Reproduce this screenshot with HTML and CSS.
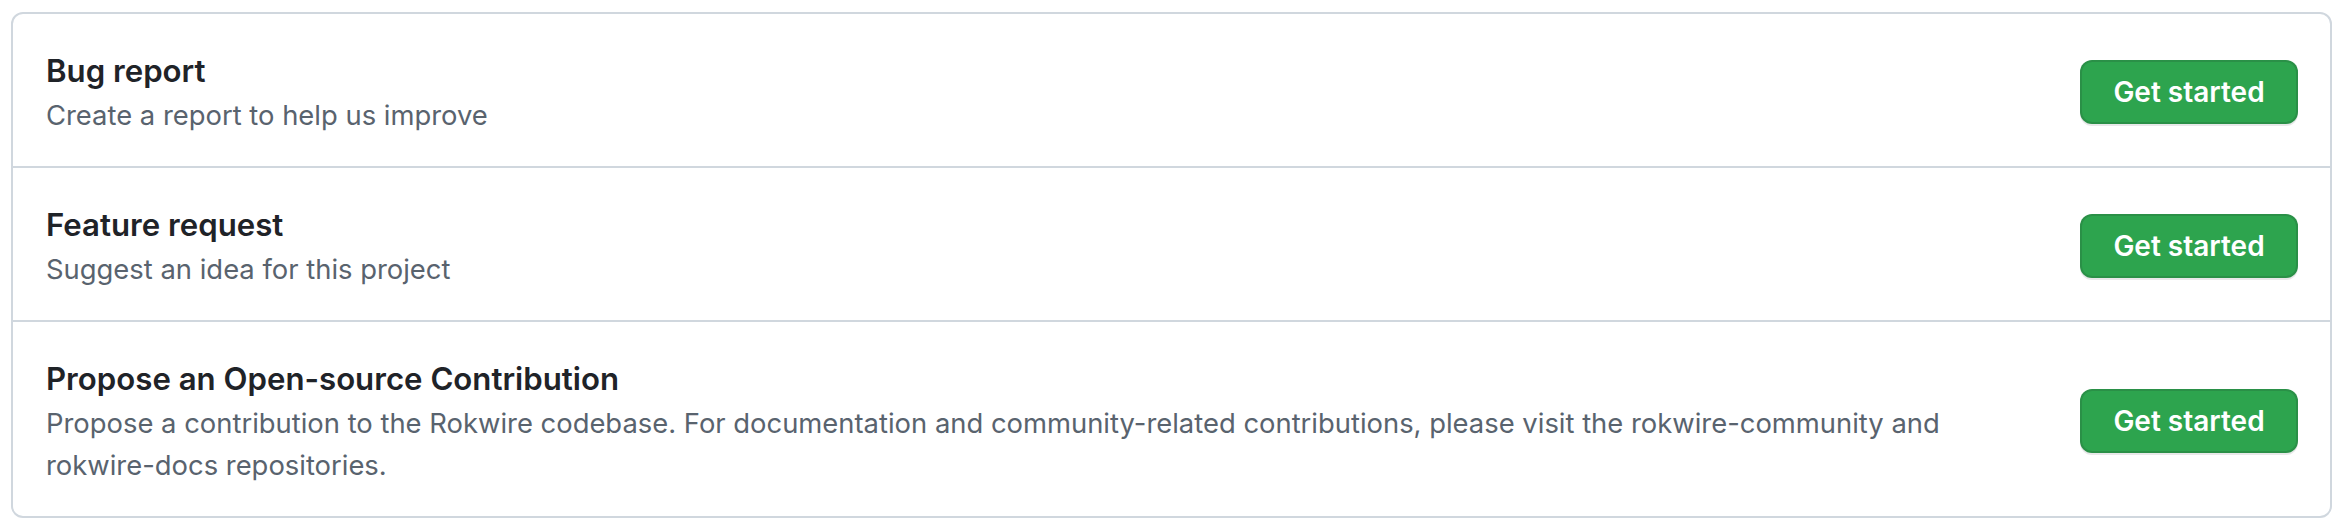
FILE: index.html
```html
<!DOCTYPE html>
<html lang="en">
<head>
<meta charset="utf-8">
<title>Issue templates</title>
<link rel="stylesheet" href="styles.css">
</head>
<body>
<div class="box">
  <div class="row">
    <div class="info">
      <h3 class="title">Bug report</h3>
      <p class="desc">Create a report to help us improve</p>
    </div>
    <a class="btn" href="#">Get started</a>
  </div>
  <div class="row">
    <div class="info">
      <h3 class="title">Feature request</h3>
      <p class="desc">Suggest an idea for this project</p>
    </div>
    <a class="btn" href="#">Get started</a>
  </div>
  <div class="row">
    <div class="info">
      <h3 class="title">Propose an Open-source Contribution</h3>
      <p class="desc">Propose a contribution to the Rokwire codebase. For documentation and community-related contributions, please visit the rokwire-community and rokwire-docs repositories.</p>
    </div>
    <a class="btn" href="#">Get started</a>
  </div>
</div>
</body>
</html>
```
FILE: styles.css
```css
html, body {
  margin: 0;
  padding: 0;
  background: #ffffff;
}
body {
  padding: 12px 2px 0 11px;
  font-family: Inter, "Liberation Sans", sans-serif;
}
.box {
  border: 2px solid #d0d7de;
  border-radius: 12px;
  background: #ffffff;
}
.row {
  display: flex;
  align-items: center;
  padding: 34px 32px 30px 33px;
  border-top: 2px solid #d0d7de;
}
.row:first-child {
  border-top: none;
}
.info {
  flex: 1;
  margin-right: 100px;
}
.title {
  margin: 0;
  font-size: 31.2px;
  line-height: 46px;
  font-weight: 600;
  color: #1f2328;
}
.desc {
  margin: 0;
  font-size: 27.4px;
  line-height: 42px;
  color: #59636e;
}
.btn {
  display: inline-flex;
  align-items: center;
  justify-content: center;
  box-sizing: border-box;
  width: 218px;
  height: 64px;
  border: 2px solid rgba(27, 31, 36, 0.15);
  border-radius: 12px;
  background: #2da44e;
  box-shadow: 0 2px 0 rgba(27, 31, 36, 0.1);
  color: #ffffff;
  font-size: 28px;
  font-weight: 600;
  text-decoration: none;
  flex-shrink: 0;
}
```
